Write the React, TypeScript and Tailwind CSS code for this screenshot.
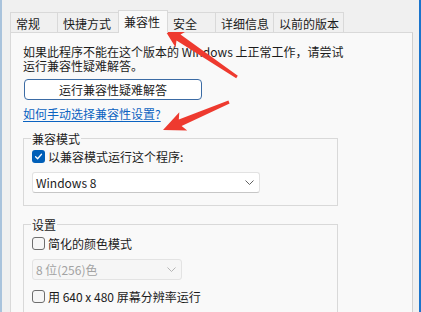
import React from "react";

type Pt = [number, number];

// builds a tapered "swoosh" arrow from its tip back to the tail
function arrowPoints(tip: Pt, tail: Pt, headLen = 22, headHalf = 10, neck = 3.5, end = 1.5) {
  const dx = tail[0] - tip[0];
  const dy = tail[1] - tip[1];
  const len = Math.hypot(dx, dy);
  const ux = dx / len;
  const uy = dy / len;
  const nx = -uy;
  const ny = ux;
  const at = (d: number, w: number) =>
    `${(tip[0] + ux * d + nx * w).toFixed(1)},${(tip[1] + uy * d + ny * w).toFixed(1)}`;
  return [
    at(0, 0),
    at(headLen, headHalf),
    at(headLen * 0.85, neck),
    at(len, end),
    at(len, -end),
    at(headLen * 0.85, -neck),
    at(headLen, -headHalf),
  ].join(" ");
}

const tabs = [
  { label: "常规", w: "w-[48px]" },
  { label: "快捷方式", w: "w-[62px]" },
  { label: "兼容性", w: "w-[50px]", active: true },
  { label: "安全", w: "w-[49px]" },
  { label: "详细信息", w: "w-[59px]" },
  { label: "以前的版本", w: "w-[71px]" },
];

function Box({ checked }: { checked?: boolean }) {
  return checked ? (
    <span className="w-[13px] h-[13px] rounded-[3px] bg-[#005fb8] flex items-center justify-center shrink-0">
      <svg width="9" height="9" viewBox="0 0 9 9">
        <path
          d="M1.6 4.7 L3.6 6.7 L7.5 2.3"
          stroke="white"
          strokeWidth="1.3"
          fill="none"
          strokeLinecap="round"
          strokeLinejoin="round"
        />
      </svg>
    </span>
  ) : (
    <span className="w-[13px] h-[13px] rounded-[3px] border border-[#6e6e6e] bg-[#f6f6f6] shrink-0" />
  );
}

function Check({ checked, label }: { checked?: boolean; label?: string }) {
  return (
    <div className="flex items-center h-[13px] gap-[3px]">
      <Box checked={checked} />
      {label && <span>{label}</span>}
    </div>
  );
}

function Combo({ value, w, disabled }: { value: string; w: string; disabled?: boolean }) {
  return (
    <div
      className={`${w} h-[21px] rounded-[3px] border flex items-center justify-between pl-[3px] pr-[5px] ${
        disabled
          ? "border-[#e3e3e3] bg-[#f6f6f6] text-[#a3a3a3]"
          : "border-[#e2e2e2] border-b-[#c6c6c6] bg-white text-[#1b1b1b]"
      }`}
    >
      <span>{value}</span>
      <svg width="9" height="5" viewBox="0 0 9 5">
        <path
          d="M0.5 0.5 L4.5 4.5 L8.5 0.5"
          stroke={disabled ? "#b5b5b5" : "#616161"}
          strokeWidth="1"
          fill="none"
        />
      </svg>
    </div>
  );
}

export default function App() {
  return (
    <div className="relative w-[421px] h-[312px] overflow-hidden bg-[#f0f0f0] border-l-2 border-l-[#a9c3dc] border-r-2 border-r-[#1a74cc] pt-[10px] pl-[8px] pr-[6px] font-['Noto_Sans_CJK_SC','Noto_Sans',sans-serif] text-[12px] leading-[13px] text-[#1b1b1b]">
      {/* tab strip */}
      <div className="relative z-10 flex items-end -mb-px">
        {tabs.map((t, i) => (
          <div
            key={t.label}
            className={`${t.w} ${i > 0 ? "-ml-px" : ""} flex items-center pl-[5px] border border-b-0 border-[#d9d9d9] ${
              t.active ? "relative z-10 h-[23px] bg-[#f9f9f9] pb-[2px]" : "h-[20px] mb-px bg-[#f0f0f0] pt-px"
            }`}
          >
            {t.label}
          </div>
        ))}
      </div>

      {/* tab page */}
      <div className="h-[300px] border border-[#d9d9d9] border-r-[#cfcfcf] bg-[#f9f9f9] pl-[12px] pt-[12px]">
        <p className="leading-[14px]">
          如果此程序不能在这个版本的 Windows 上正常工作，请尝试
          <br />
          运行兼容性疑难解答。
        </p>

        <button className="mt-[6px] ml-px w-[178px] h-[21px] rounded-[4px] border border-[#3b6ba4] bg-white flex items-center justify-center">
          运行兼容性疑难解答
        </button>

        <a className="mt-[7px] block w-fit text-[#0b63c1] underline underline-offset-2 decoration-1">
          如何手动选择兼容性设置?
        </a>

        <fieldset className="mt-[12px] w-[315px] border border-[#d9d9d9] px-[8px] pt-[5px] pb-[12px]">
          <legend className="-ml-px px-px">兼容模式</legend>
          <Check checked label="以兼容模式运行这个程序:" />
          <div className="mt-[9px]">
            <Combo value="Windows 8" w="w-[228px]" />
          </div>
        </fieldset>

        <fieldset className="mt-[12px] w-[315px] border border-[#d9d9d9] px-[8px] pt-[6px] pb-[12px]">
          <legend className="-ml-px px-px">设置</legend>
          <Check label="简化的颜色模式" />
          <div className="mt-[9px]">
            <Combo value="8 位(256)色" w="w-[150px]" disabled />
          </div>
          <div className="mt-[10px]">
            <Check label="用 640 x 480 屏幕分辨率运行" />
          </div>
          <div className="mt-[9px]">
            <Check />
          </div>
        </fieldset>
      </div>

      {/* red annotation arrows */}
      <svg className="absolute inset-0 pointer-events-none" width="421" height="312">
        <polygon points={arrowPoints([161, 27], [235, 77])} fill="#ee3a2f" />
        <polygon points={arrowPoints([161, 130], [227, 102])} fill="#ee3a2f" />
      </svg>
    </div>
  );
}
